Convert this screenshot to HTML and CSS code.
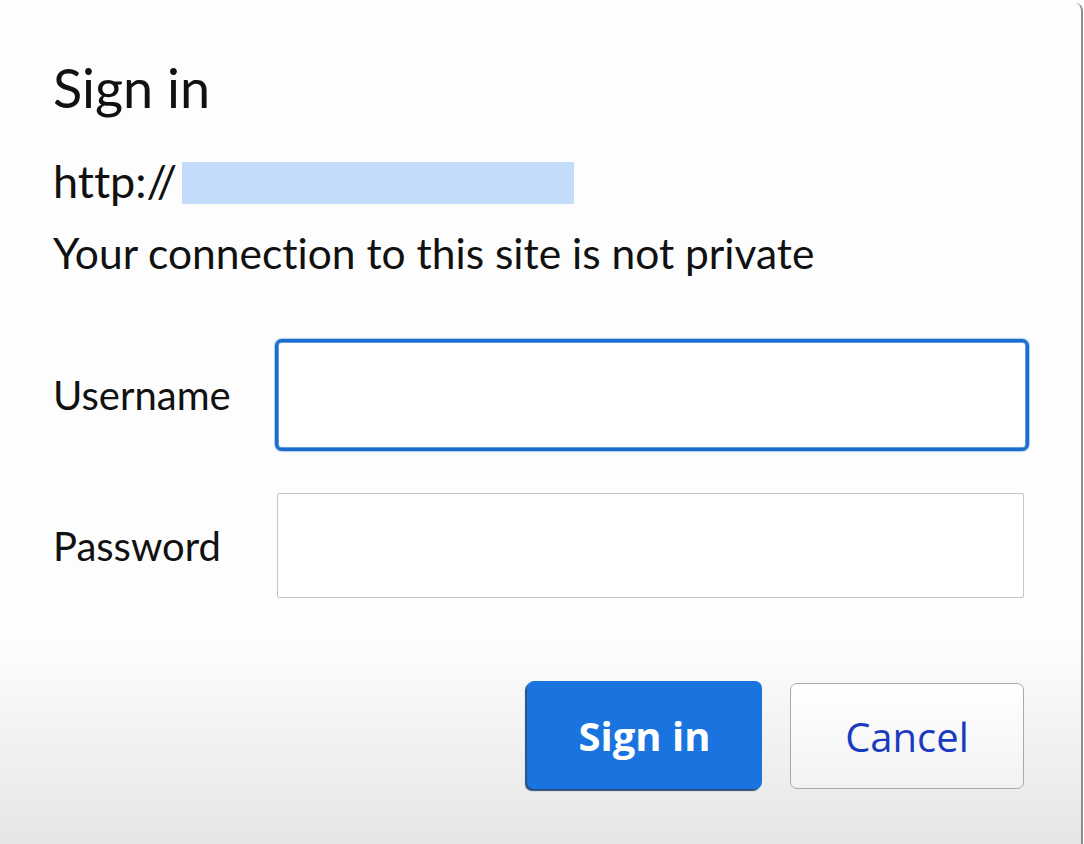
FILE: index.html
```html
<!DOCTYPE html>
<html lang="en">
<head>
<meta charset="utf-8">
<title>Sign in</title>
<link rel="stylesheet" href="styles.css">
</head>
<body>
<div class="dialog">
  <div class="content">
    <h1 class="title">Sign in</h1>
    <div class="url-row">
      <span class="url-text">http://</span>
      <span class="url-mask"></span>
    </div>
    <p class="warning">Your connection to this site is not private</p>
    <form class="form">
      <label class="label" for="user">Username</label>
      <input class="field field-focus" id="user" type="text">
      <label class="label" for="pass">Password</label>
      <input class="field field-plain" id="pass" type="password">
    </form>
    <div class="actions">
      <button class="btn btn-primary" type="button">Sign in</button>
      <button class="btn btn-secondary" type="button">Cancel</button>
    </div>
  </div>
</div>
</body>
</html>
```

FILE: styles.css
```css
html, body {
  margin: 0;
  padding: 0;
  height: 100%;
  overflow: hidden;
}

body {
  background: #fdfdfd;
  font-family: "Lato", "Open Sans", sans-serif;
  font-variant-ligatures: none;
  color: #111111;
}

.dialog {
  box-sizing: border-box;
  width: 1083px;
  height: 852px;
  margin-top: 3px;
  border-right: 2px solid #8e8e8e;
  border-radius: 0 8px 12px 0;
  background: linear-gradient(to bottom, #fdfdfd 0px, #fdfdfd 640px, #f4f4f4 720px, #e4e4e4 852px);
}

.content {
  width: 971px;
  padding-left: 53px;
  padding-top: 55px;
}

.title {
  margin: 0;
  font-size: 54px;
  font-weight: 400;
  line-height: 60px;
}

.url-row {
  display: flex;
  align-items: flex-start;
  margin-top: 42px;
  height: 42px;
}

.url-text {
  font-size: 45px;
  line-height: 42px;
}

.url-mask {
  display: block;
  width: 392px;
  height: 42px;
  margin-left: 5px;
  margin-top: 2px;
  background: #c2dcfa;
}

.warning {
  margin: 26px 0 0 0;
  font-size: 42.5px;
  line-height: 50px;
}

.form {
  display: grid;
  grid-template-columns: 222px 1fr;
  align-items: center;
  row-gap: 42px;
  margin-top: 61px;
}

.label {
  font-size: 40px;
  line-height: 48px;
}

.field {
  box-sizing: border-box;
  display: block;
  background: #ffffff;
  outline: none;
  margin: 0;
  padding: 0;
}

.field-focus {
  width: 754px;
  height: 112px;
  border: 3px solid #1a6ccd;
  border-radius: 7px;
  box-shadow: inset 0 0 0 1px #5a9be0, 0 0 1px 1px rgba(26, 108, 205, 0.35);
}

.field-plain {
  width: 747px;
  height: 105px;
  margin-left: 2px;
  border: 1px solid #c4c4c4;
  border-radius: 2px;
}

.actions {
  display: flex;
  justify-content: flex-end;
  align-items: flex-start;
  gap: 28px;
  margin-top: 83px;
}

.btn {
  box-sizing: border-box;
  font-family: "Open Sans", "Noto Sans", sans-serif;
  cursor: pointer;
  padding: 0;
}

.btn-primary {
  width: 235px;
  height: 108px;
  border: none;
  border-radius: 7px;
  background: #1a74df;
  color: #ffffff;
  font-size: 40px;
  font-weight: 700;
  box-shadow: -2px 2px 1px #2b4f7e;
}

.btn-secondary {
  width: 234px;
  height: 106px;
  margin-top: 2px;
  border: 1px solid #a9a9a9;
  border-radius: 7px;
  background: linear-gradient(to bottom, #ffffff, #f2f2f2);
  color: #1a3bbf;
  font-size: 40px;
  font-weight: 400;
  letter-spacing: 0;
}
```
